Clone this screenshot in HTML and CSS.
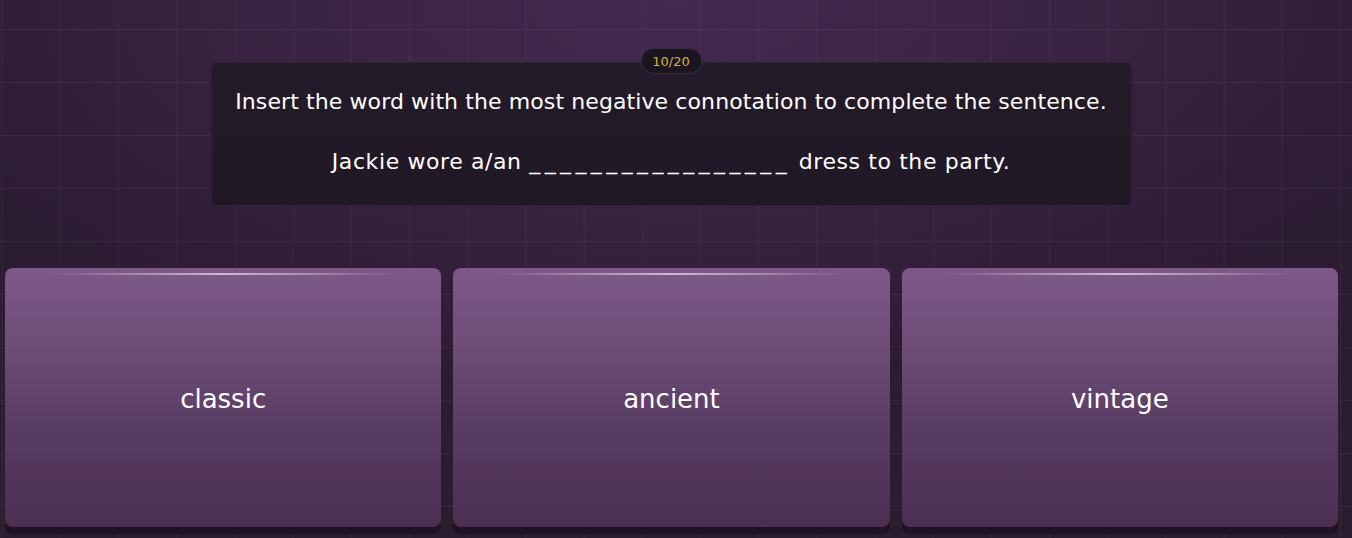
FILE: index.html
```html
<!DOCTYPE html>
<html lang="en">
<head>
<meta charset="utf-8">
<title>Quiz</title>
<link rel="stylesheet" href="styles.css">
</head>
<body>
<div class="page">
  <div class="question-wrap">
    <div class="badge">10/20</div>
    <div class="card">
      <p class="prompt">Insert the word with the most negative connotation to complete the sentence.</p>
      <p class="sentence">Jackie wore a/an <span class="blank">_________________</span> dress to the party.</p>
    </div>
  </div>
  <div class="options">
    <div class="option"><span class="shine"></span><span class="label">classic</span></div>
    <div class="option"><span class="shine"></span><span class="label">ancient</span></div>
    <div class="option"><span class="shine"></span><span class="label">vintage</span></div>
  </div>
</div>
</body>
</html>
```

FILE: styles.css
```css
html, body {
  margin: 0;
  height: 100%;
}
body {
  font-family: "DejaVu Sans", "Open Sans", sans-serif;
  color: #ffffff;
  background-color: #33213b;
  background-image:
    linear-gradient(rgba(255,255,255,0.045) 1px, transparent 1px),
    linear-gradient(90deg, rgba(255,255,255,0.045) 1px, transparent 1px),
    radial-gradient(ellipse 60% 70% at 50% 0%, #45294f 0%, #3a2444 45%, #2c1c32 100%);
  background-size: 58.2px 53px, 58.2px 53px, 100% 100%;
  background-position: 1.8px 29px, 1.8px 29px, 0 0;
  overflow: hidden;
}
.page {
  padding: 48px 14px 0 5px;
  display: flex;
  flex-direction: column;
}
.question-wrap {
  position: relative;
  width: 922px;
  margin: 0 auto;
  padding-top: 14px;
  transform: translateX(-0.5px);
}
.badge {
  position: absolute;
  top: 0;
  left: 50%;
  transform: translateX(-50%);
  height: 26px;
  width: 62px;
  box-sizing: border-box;
  border-radius: 13px;
  background: #1b1520;
  border: 1px solid #3a2f3e;
  color: #d6b423;
  font-size: 13px;
  display: flex;
  align-items: center;
  justify-content: center;
  z-index: 2;
}
.card {
  height: 144px;
  box-sizing: border-box;
  background: linear-gradient(180deg, #241b2a 0%, #211825 100%);
  border: 1px solid #2e2334;
  border-radius: 6px;
  padding-top: 25px;
  text-align: center;
  white-space: nowrap;
}
.prompt {
  margin: 0;
  font-size: 22px;
  letter-spacing: 0.1px;
  line-height: 28px;
}
.sentence {
  margin: 32px 0 0;
  font-size: 22px;
  letter-spacing: 0.6px;
  line-height: 28px;
}
.blank {
  letter-spacing: 4.4px;
}
.options {
  margin-top: 62px;
  display: grid;
  grid-template-columns: repeat(3, 1fr);
  gap: 12px;
}
.option {
  position: relative;
  height: 259px;
  border-radius: 8px;
  background: linear-gradient(180deg, #7d5987 0%, #6e4d79 30%, #5a3d63 60%, #4b2f51 100%);
  box-shadow: 0 7px 0 #1e1320;
  display: flex;
  align-items: center;
  justify-content: center;
}
.shine {
  position: absolute;
  top: 5px;
  left: 10%;
  right: 10%;
  height: 2px;
  background: linear-gradient(90deg, rgba(255,255,255,0) 0%, rgba(255,255,255,0.25) 20%, rgba(255,255,255,0.6) 50%, rgba(255,255,255,0.25) 80%, rgba(255,255,255,0) 100%);
}
.label {
  font-size: 26px;
  line-height: 34px;
  margin-top: 2px;
}
```
